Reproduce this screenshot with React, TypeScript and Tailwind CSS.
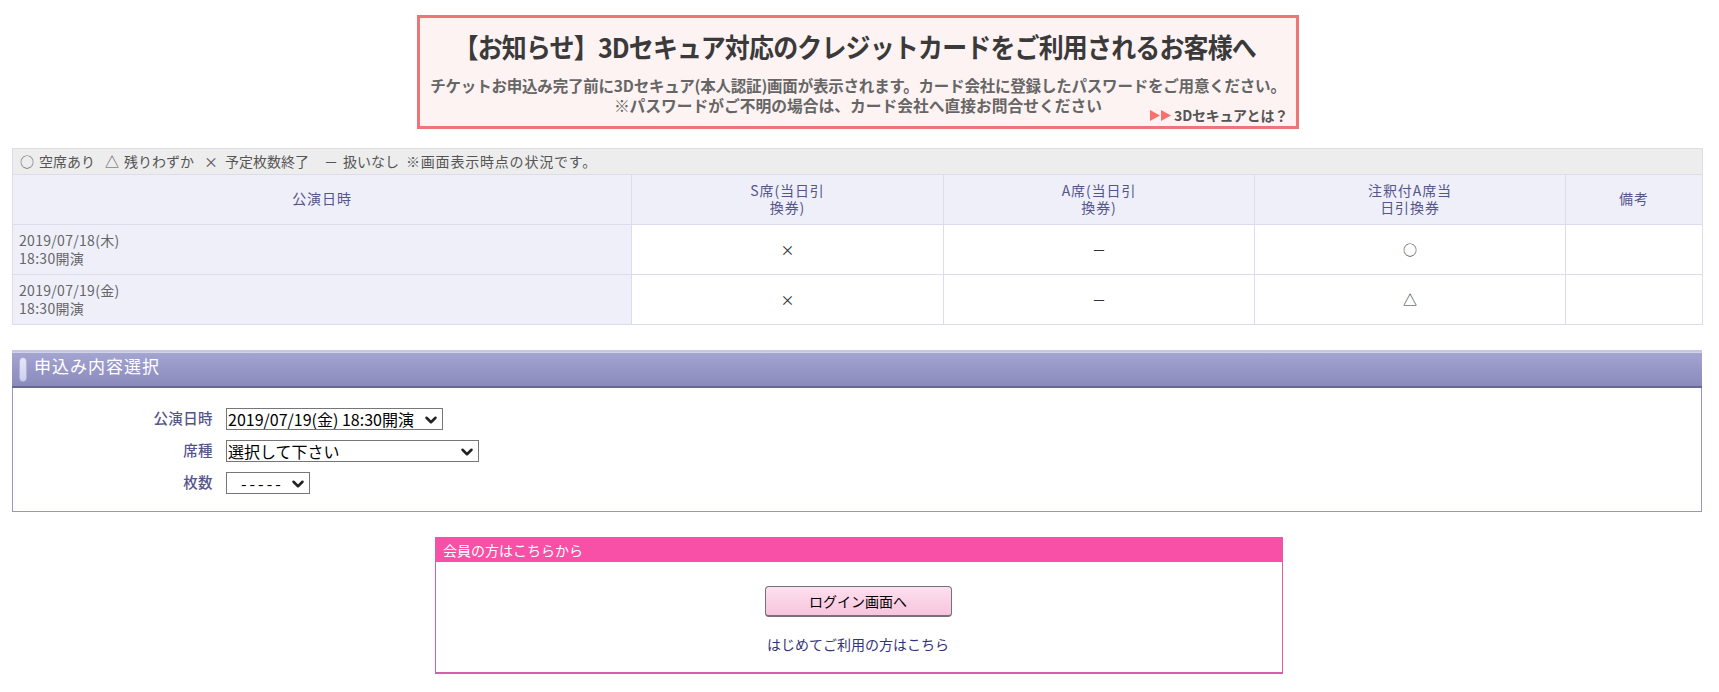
import React from "react";
import { ChevronDown } from "lucide-react";

const jp = "font-['Noto_Sans_CJK_JP','Noto_Sans',sans-serif]";
const th = "border border-[#dcdcec] bg-[#efeffa] text-[14px] leading-[17px] font-normal tracking-[0.9px] text-[#55558a] text-center align-middle pb-[2px]";
const td = "border border-[#dcdcec] bg-white text-[14px] text-[#333] text-center align-middle";
const dateTd = "border border-[#dcdcec] bg-[#efeffa] text-[14px] leading-[18px] tracking-[0.3px] text-[#666] text-left align-middle pl-[6px] pb-[2px]";
const label = "w-[200px] -mt-[3px] text-right text-[14.5px] font-medium text-[#55558a] tracking-[0.4px]";
const sel = "appearance-none h-[22px] border border-[#767676] bg-white text-black text-[16px] leading-[20px] rounded-none pl-[1px] pr-0";

function Row({ date, s, a, n }: { date: string; s: string; a: string; n: string }) {
  return (
    <tr className="h-[50px]">
      <td className={dateTd}>
        {date}
        <br />
        18:30開演
      </td>
      <td className={td}>{s}</td>
      <td className={td}>{a}</td>
      <td className={td}>{n}</td>
      <td className={td}></td>
    </tr>
  );
}

function Select({ width, text, extra }: { width: string; text: string; extra?: string }) {
  return (
    <span className="relative inline-flex">
      <select className={`${sel} ${width} ${extra ?? ""}`} defaultValue="a">
        <option value="a">{text}</option>
      </select>
      <ChevronDown size={18} strokeWidth={3.4} className="absolute right-[3px] top-[3px] text-[#222] pointer-events-none" />
    </span>
  );
}

export default function App() {
  return (
    <div className={`${jp} bg-white min-h-[692px] pl-3 pr-4 pt-[15px] pb-[18px]`}>
      <div className="ml-[405px] w-[882px] h-[114px] border-[3px] border-[#ee7575] bg-[#fdf3f3] text-[#3a3a3a] flex flex-col items-center">
        <div className="mt-[9px] -ml-[6px] text-[27px] leading-[40px] font-bold tracking-[-0.9px] whitespace-nowrap scale-x-[0.925]">
          【お知らせ】3Dセキュア対応のクレジットカードをご利用されるお客様へ
        </div>
        <div className="mt-[8px] text-[15.5px] leading-[20px] font-bold text-[#666] tracking-[-0.2px] whitespace-nowrap">
          チケットお申込み完了前に3Dセキュア(本人認証)画面が表示されます。カード会社に登録したパスワードをご用意ください。
        </div>
        <div className="relative mt-[1px] w-full text-center text-[15.75px] leading-[20px] font-bold text-[#666] whitespace-nowrap">
          ※パスワードがご不明の場合は、カード会社へ直接お問合せください
          <span className="absolute right-[8px] top-[10px] flex items-center text-[14px] leading-[18px] text-[#555] tracking-[-0.2px]">
            <svg width="24" height="13" viewBox="0 0 24 13" className="mr-[1px]">
              <path d="M1 1 L11 6.5 L1 12 Z M12 1 L22 6.5 L12 12 Z" fill="#f8716f" />
            </svg>
            3Dセキュアとは？
          </span>
        </div>
      </div>

      <table className="mt-[19px] w-[1690px] table-fixed border-collapse">
        <colgroup>
          <col className="w-[619px]" />
          <col className="w-[312px]" />
          <col className="w-[311px]" />
          <col className="w-[311px]" />
          <col className="w-[137px]" />
        </colgroup>
        <thead>
          <tr className="h-[26px]">
            <td colSpan={5} className="border border-[#dcdcec] bg-[#ededed] text-[14px] text-[#555] pl-[7px]">
              <div className="flex whitespace-nowrap">
                <span>○</span>
                <span className="ml-[5px]">空席あり</span>
                <span className="ml-[10px]">△</span>
                <span className="ml-[5px]">残りわずか</span>
                <span className="ml-[10px]">×</span>
                <span className="ml-[7px]">予定枚数終了</span>
                <span className="ml-[15px]">－</span>
                <span className="ml-[5px]">扱いなし</span>
                <span className="ml-[7px] tracking-[0.8px]">※画面表示時点の状況です。</span>
              </div>
            </td>
          </tr>
          <tr className="h-[50px]">
            <th className={th}>公演日時</th>
            <th className={th}>
              S席(当日引
              <br />
              換券)
            </th>
            <th className={th}>
              A席(当日引
              <br />
              換券)
            </th>
            <th className={th}>
              注釈付A席当
              <br />
              日引換券
            </th>
            <th className={th}>備考</th>
          </tr>
        </thead>
        <tbody>
          <Row date="2019/07/18(木)" s="×" a="－" n="○" />
          <Row date="2019/07/19(金)" s="×" a="－" n="△" />
        </tbody>
      </table>

      <section className="mt-[25px] w-[1690px]">
        <div className="h-[38px] border-t-[2px] border-b-[2px] border-t-[#c6c6e4] border-b-[#66669a] bg-gradient-to-b from-[#a5a5d2] to-[#8a8abc] flex items-center pl-[7px] pb-[7px] shadow-[inset_0_1px_0_#ffffff80]">
          <span className="w-[8px] h-[25px] mt-[7px] rounded-full bg-gradient-to-b from-[#e6e6f8] to-[#cfcff0] border border-[#b0b0d8]" />
          <span className="ml-[7px] text-[17px] text-white tracking-[1px]">申込み内容選択</span>
        </div>
        <div className="h-[124px] border border-t-0 border-[#9a95c4] pt-[20px] flex flex-col gap-[10px]">
          <div className="flex items-center gap-[13px]">
            <span className={label}>公演日時</span>
            <Select width="w-[217px]" text="2019/07/19(金) 18:30開演" />
          </div>
          <div className="flex items-center gap-[13px]">
            <span className={label}>席種</span>
            <Select width="w-[253px]" text="選択して下さい" extra="text-[15.5px]" />
          </div>
          <div className="flex items-center gap-[13px]">
            <span className={label}>枚数</span>
            <Select width="w-[84px]" text="-----" extra="pl-[14px] tracking-[3px]" />
          </div>
        </div>
      </section>

      <section className="mt-[25px] ml-[423px] w-[848px] h-[137px] border border-[#d660aa] border-b-2 flex flex-col items-center">
        <div className="w-full h-[24px] bg-[#f750a6] text-white text-[14px] leading-[24px] pl-[7px]">
          会員の方はこちらから
        </div>
        <button className="mt-[24px] -ml-[2px] w-[187px] h-[31px] rounded-[4px] border border-[#77707a] border-b-2 bg-gradient-to-b from-[#fde0ee] to-[#f8c4de] text-[14px] text-black">
          ログイン画面へ
        </button>
        <a className="mt-[18px] -ml-[2px] text-[14px] leading-[18px] text-[#33337a]">はじめてご利用の方はこちら</a>
      </section>
    </div>
  );
}
